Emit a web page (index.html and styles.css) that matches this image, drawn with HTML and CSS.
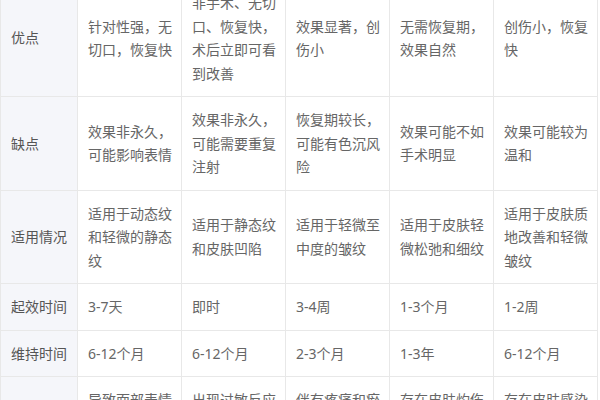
FILE: index.html
```html
<!DOCTYPE html>
<html lang="zh-CN">
<head>
<meta charset="utf-8">
<title>对比</title>
<link rel="stylesheet" href="styles.css">
</head>
<body>
<table class="cmp">
  <colgroup>
    <col class="c-head">
    <col class="c-item"><col class="c-item"><col class="c-item"><col class="c-item"><col class="c-item">
  </colgroup>
  <tbody>
    <tr>
      <th>优点</th>
      <td>针对性强，无切口，恢复快</td>
      <td>非手术、无切口、恢复快，术后立即可看到改善</td>
      <td>效果显著，创伤小</td>
      <td>无需恢复期，效果自然</td>
      <td>创伤小，恢复快</td>
    </tr>
    <tr>
      <th>缺点</th>
      <td>效果非永久，可能影响表情</td>
      <td>效果非永久，可能需要重复注射</td>
      <td>恢复期较长，可能有色沉风险</td>
      <td>效果可能不如手术明显</td>
      <td>效果可能较为温和</td>
    </tr>
    <tr>
      <th>适用情况</th>
      <td>适用于动态纹和轻微的静态纹</td>
      <td>适用于静态纹和皮肤凹陷</td>
      <td>适用于轻微至中度的皱纹</td>
      <td>适用于皮肤轻微松弛和细纹</td>
      <td>适用于皮肤质地改善和轻微皱纹</td>
    </tr>
    <tr>
      <th>起效时间</th>
      <td>3-7天</td>
      <td>即时</td>
      <td>3-4周</td>
      <td>1-3个月</td>
      <td>1-2周</td>
    </tr>
    <tr>
      <th>维持时间</th>
      <td>6-12个月</td>
      <td>6-12个月</td>
      <td>2-3个月</td>
      <td>1-3年</td>
      <td>6-12个月</td>
    </tr>
    <tr>
      <th>风险</th>
      <td>导致面部表情僵硬</td>
      <td>出现过敏反应或感染</td>
      <td>伴有疼痛和瘀青</td>
      <td>存在皮肤灼伤风险</td>
      <td>存在皮肤感染风险</td>
    </tr>
  </tbody>
</table>
</body>
</html>
```

FILE: styles.css
```css
html, body {
  margin: 0;
  padding: 0;
  background: #ffffff;
}

body {
  font-family: "Noto Sans", "Noto Sans CJK SC", sans-serif;
  font-size: 14px;
  color: #666666;
}

.cmp {
  width: 597px;
  margin-top: -21px;
  border-collapse: collapse;
  table-layout: fixed;
}

.c-head {
  width: 77px;
}

.c-item {
  width: 104px;
}

.cmp th,
.cmp td {
  border: 1px solid #e8e8e8;
  padding: 11px 8px 11px 10px;
  line-height: 23.5px;
  vertical-align: middle;
  text-align: left;
  font-weight: 400;
  word-break: break-all;
}

.cmp th {
  background: #f5f6fa;
  color: #555555;
  white-space: nowrap;
}

.cmp td {
  color: #666666;
}
```
